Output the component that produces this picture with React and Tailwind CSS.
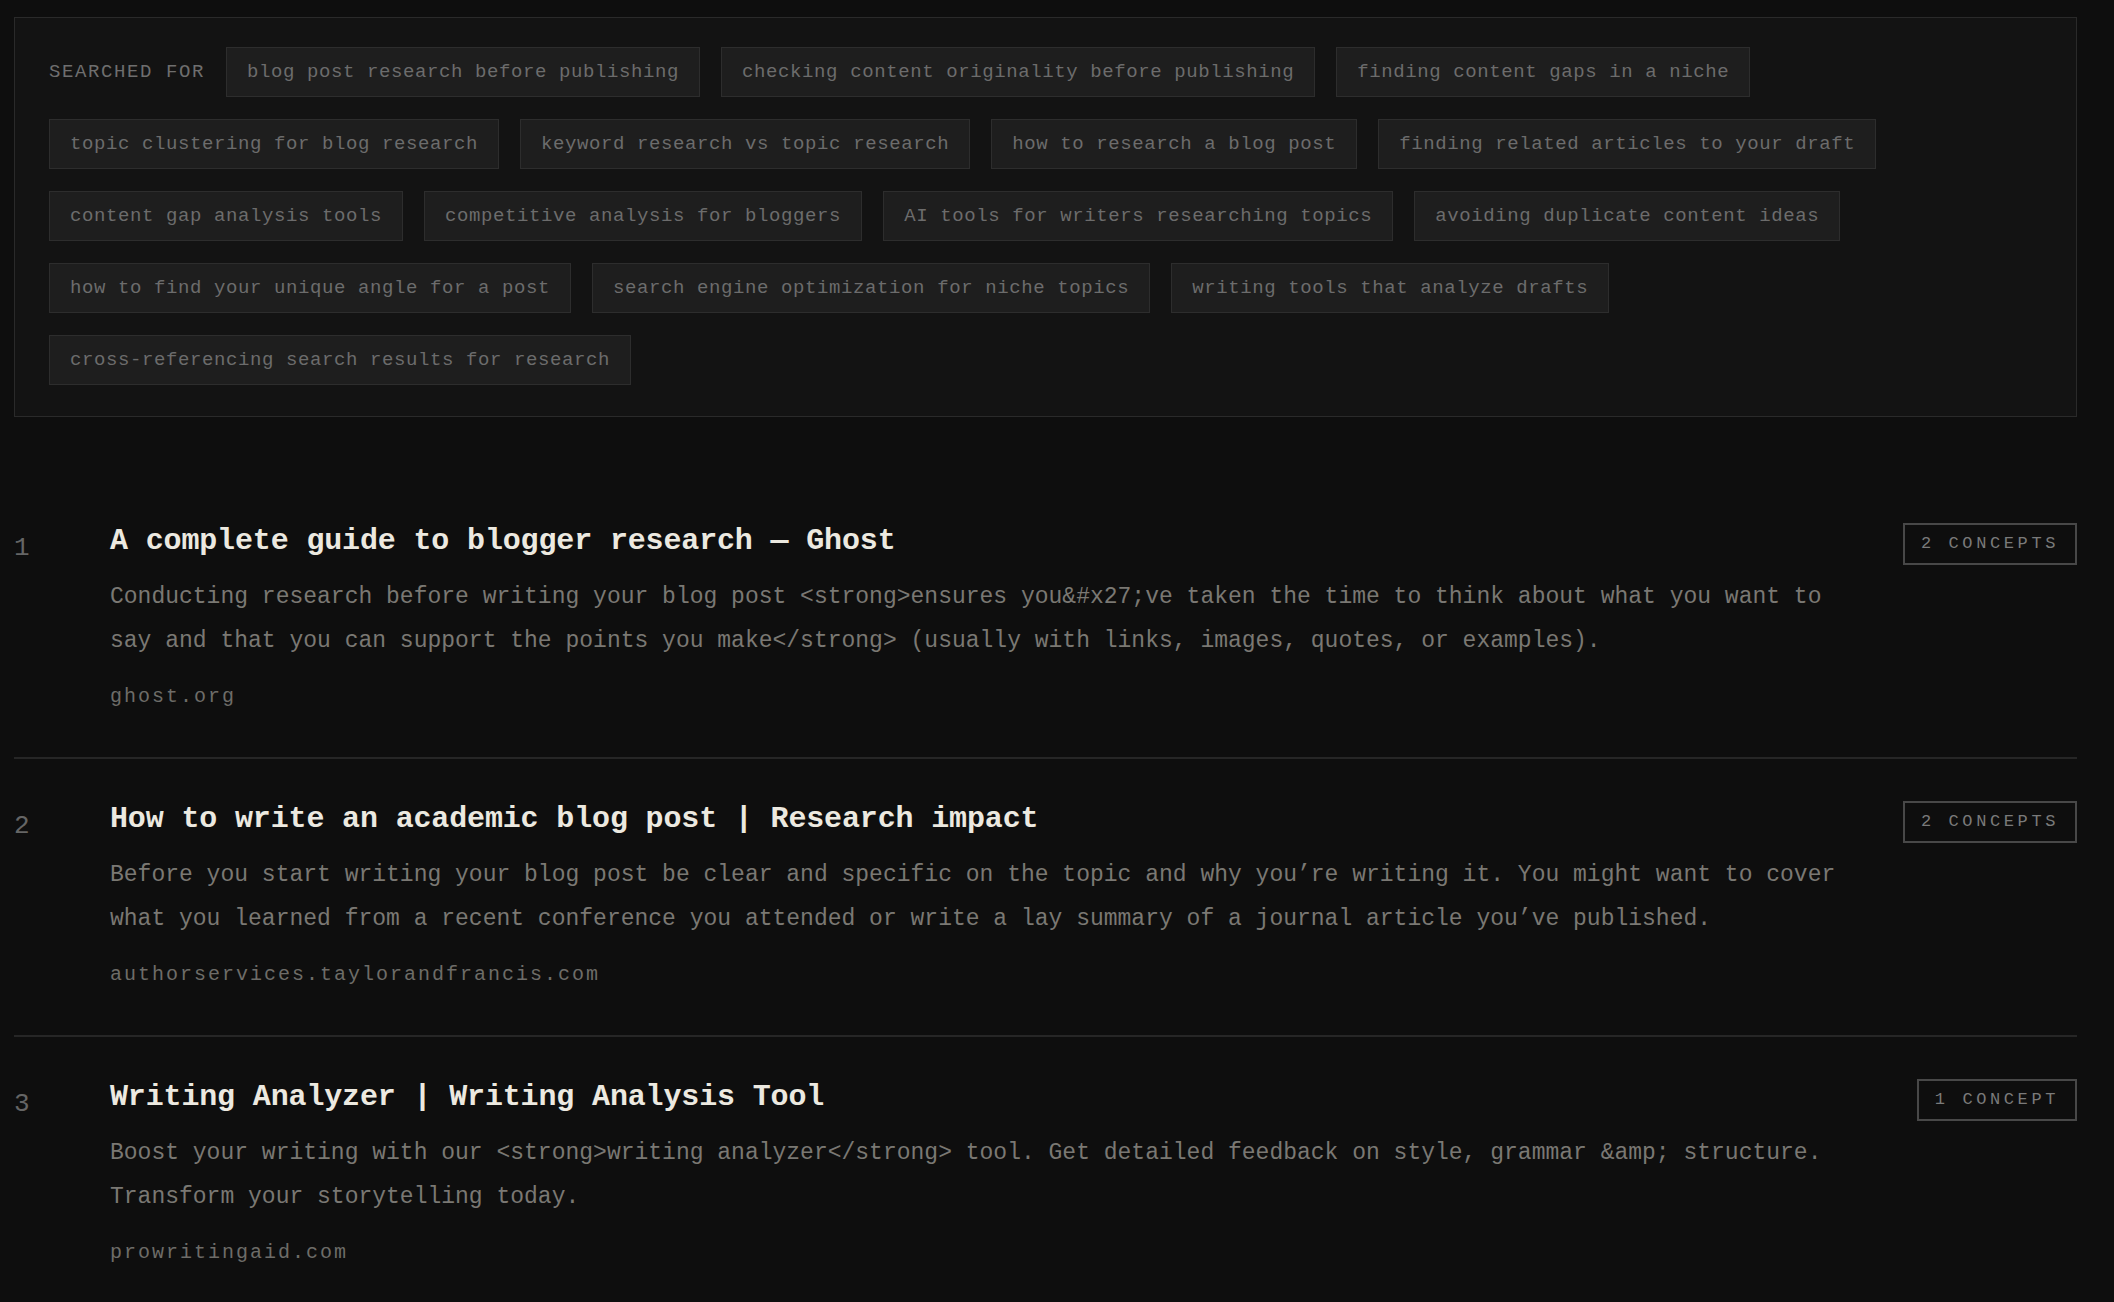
const queries = [
  "blog post research before publishing",
  "checking content originality before publishing",
  "finding content gaps in a niche",
  "topic clustering for blog research",
  "keyword research vs topic research",
  "how to research a blog post",
  "finding related articles to your draft",
  "content gap analysis tools",
  "competitive analysis for bloggers",
  "AI tools for writers researching topics",
  "avoiding duplicate content ideas",
  "how to find your unique angle for a post",
  "search engine optimization for niche topics",
  "writing tools that analyze drafts",
  "cross-referencing search results for research",
];

const results = [
  {
    title: "A complete guide to blogger research \u2014 Ghost",
    desc: "Conducting research before writing your blog post <strong>ensures you&#x27;ve taken the time to think about what you want to say and that you can support the points you make</strong> (usually with links, images, quotes, or examples).",
    domain: "ghost.org",
    concepts: "2 CONCEPTS",
  },
  {
    title: "How to write an academic blog post | Research impact",
    desc: "Before you start writing your blog post be clear and specific on the topic and why you\u2019re writing it. You might want to cover what you learned from a recent conference you attended or write a lay summary of a journal article you\u2019ve published.",
    domain: "authorservices.taylorandfrancis.com",
    concepts: "2 CONCEPTS",
  },
  {
    title: "Writing Analyzer | Writing Analysis Tool",
    desc: "Boost your writing with our <strong>writing analyzer</strong> tool. Get detailed feedback on style, grammar &amp; structure. Transform your storytelling today.",
    domain: "prowritingaid.com",
    concepts: "1 CONCEPT",
  },
];

const mono = "font-['Liberation_Mono','DejaVu_Sans_Mono',monospace]";

const ResultRow = ({ index, item, last }) => {
  return (
    <div
      className={`flex pt-[40px] pb-[46px] ${last ? "" : "border-b-2 border-[#262626]"}`}
    >
      <div className={`w-[96px] shrink-0 pt-[7px] ${mono} text-[26px] leading-[40px] text-[#656565]`}>
        {index}
      </div>
      <div className="flex-1 min-w-0">
        <h2 className={`${mono} font-bold text-[30px] leading-[40px] tracking-[-0.15px] text-[#ece9e0]`}>
          {item.title}
        </h2>
        <p className={`mt-[14px] ${mono} text-[23px] leading-[44px] text-[#7a7873]`}>
          {item.desc}
        </p>
        <p className={`mt-[20px] ${mono} text-[20px] leading-[28px] tracking-[2px] text-[#6d6c68]`}>
          {item.domain}
        </p>
      </div>
      <div className="ml-[36px] shrink-0 pt-[2px]">
        <div className={`border-2 border-[#484848] px-[16px] py-[8px] ${mono} text-[17px] leading-[22px] tracking-[3.6px] text-[#7a7a7a]`}>
          {item.concepts}
        </div>
      </div>
    </div>
  );
};

export default function App() {
  return (
    <div className="min-h-screen bg-[#0e0e0e] pt-[17px] pl-[14px] pr-[37px] pb-10">
      <div className="border border-[#2a2a2a] bg-[#131313] px-[34px] pt-[29px] pb-[31px]">
        <div className="flex flex-wrap items-center gap-x-[21px] gap-y-[22px]">
          <span className={`${mono} text-[19px] leading-[24px] tracking-[1.6px] text-[#6e6e6e]`}>
            SEARCHED FOR
          </span>
          {queries.map((q) => (
            <span
              key={q}
              className={`border border-[#2d2d2d] bg-[#1e1e1e] px-5 py-3 ${mono} text-[19px] leading-[24px] tracking-[0.6px] text-[#6c6c6c]`}
            >
              {q}
            </span>
          ))}
        </div>
      </div>
      <div className="mt-[64px]">
        {results.map((r, i) => (
          <ResultRow key={r.domain} index={i + 1} item={r} last={i === results.length - 1} />
        ))}
      </div>
    </div>
  );
}
